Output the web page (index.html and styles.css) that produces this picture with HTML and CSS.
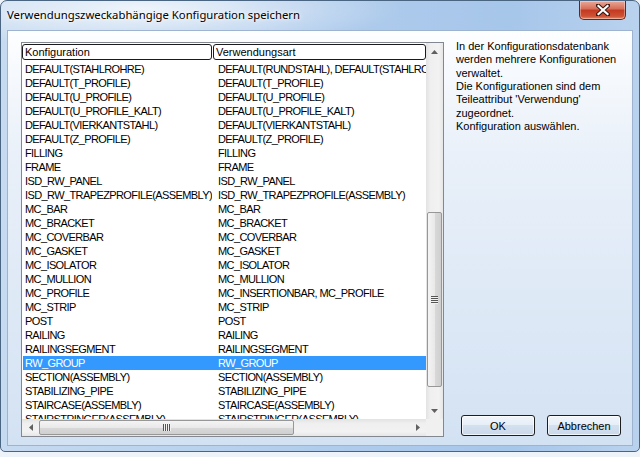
FILE: index.html
```html
<!DOCTYPE html>
<html lang="de">
<head>
  <meta charset="UTF-8">
  <title>Verwendungszweckabhängige Konfiguration speichern</title>
  <link rel="stylesheet" href="styles.css">
</head>
<body>

  <div class="window">
    <div class="titlebar">
      <span class="title">Verwendungszweckabhängige Konfiguration speichern</span>
      <div class="close">
        <svg width="14" height="12" viewBox="0 0 14 12">
          <path d="M2 1.5 L12 10.5 M12 1.5 L2 10.5" stroke="#3b1a14" stroke-width="4.2" stroke-linecap="square"/>
          <path d="M2.5 2 L11.5 10 M11.5 2 L2.5 10" stroke="#ffffff" stroke-width="2.2" stroke-linecap="square"/>
        </svg>
      </div>
    </div>

    <div class="client">
      <div class="listbox">
        <div class="view">
          <div class="header">
            <div class="hcell h1">Konfiguration</div>
            <div class="hcell h2">Verwendungsart</div>
          </div>
          <div class="rows">
            <div class="row"><span class="c1">DEFAULT(STAHLROHRE)</span><span class="c2">DEFAULT(RUNDSTAHL), DEFAULT(STAHLROHRE)</span></div>
            <div class="row"><span class="c1">DEFAULT(T_PROFILE)</span><span class="c2">DEFAULT(T_PROFILE)</span></div>
            <div class="row"><span class="c1">DEFAULT(U_PROFILE)</span><span class="c2">DEFAULT(U_PROFILE)</span></div>
            <div class="row"><span class="c1">DEFAULT(U_PROFILE_KALT)</span><span class="c2">DEFAULT(U_PROFILE_KALT)</span></div>
            <div class="row"><span class="c1">DEFAULT(VIERKANTSTAHL)</span><span class="c2">DEFAULT(VIERKANTSTAHL)</span></div>
            <div class="row"><span class="c1">DEFAULT(Z_PROFILE)</span><span class="c2">DEFAULT(Z_PROFILE)</span></div>
            <div class="row"><span class="c1">FILLING</span><span class="c2">FILLING</span></div>
            <div class="row"><span class="c1">FRAME</span><span class="c2">FRAME</span></div>
            <div class="row"><span class="c1">ISD_RW_PANEL</span><span class="c2">ISD_RW_PANEL</span></div>
            <div class="row"><span class="c1">ISD_RW_TRAPEZPROFILE(ASSEMBLY)</span><span class="c2">ISD_RW_TRAPEZPROFILE(ASSEMBLY)</span></div>
            <div class="row"><span class="c1">MC_BAR</span><span class="c2">MC_BAR</span></div>
            <div class="row"><span class="c1">MC_BRACKET</span><span class="c2">MC_BRACKET</span></div>
            <div class="row"><span class="c1">MC_COVERBAR</span><span class="c2">MC_COVERBAR</span></div>
            <div class="row"><span class="c1">MC_GASKET</span><span class="c2">MC_GASKET</span></div>
            <div class="row"><span class="c1">MC_ISOLATOR</span><span class="c2">MC_ISOLATOR</span></div>
            <div class="row"><span class="c1">MC_MULLION</span><span class="c2">MC_MULLION</span></div>
            <div class="row"><span class="c1">MC_PROFILE</span><span class="c2">MC_INSERTIONBAR, MC_PROFILE</span></div>
            <div class="row"><span class="c1">MC_STRIP</span><span class="c2">MC_STRIP</span></div>
            <div class="row"><span class="c1">POST</span><span class="c2">POST</span></div>
            <div class="row"><span class="c1">RAILING</span><span class="c2">RAILING</span></div>
            <div class="row"><span class="c1">RAILINGSEGMENT</span><span class="c2">RAILINGSEGMENT</span></div>
            <div class="row selected"><span class="c1">RW_GROUP</span><span class="c2">RW_GROUP</span></div>
            <div class="row"><span class="c1">SECTION(ASSEMBLY)</span><span class="c2">SECTION(ASSEMBLY)</span></div>
            <div class="row"><span class="c1">STABILIZING_PIPE</span><span class="c2">STABILIZING_PIPE</span></div>
            <div class="row"><span class="c1">STAIRCASE(ASSEMBLY)</span><span class="c2">STAIRCASE(ASSEMBLY)</span></div>
            <div class="row"><span class="c1">STAIRSTRINGER(ASSEMBLY)</span><span class="c2">STAIRSTRINGER(ASSEMBLY)</span></div>
          </div>
        </div>

        <div class="vscroll">
          <div class="arrow">
            <svg width="7" height="4" viewBox="0 0 7 4"><path d="M0 4 L3.5 0 L7 4 Z" fill="#606060"/></svg>
          </div>
          <div class="vthumb"><div class="grip"></div></div>
          <div class="arrow bottom">
            <svg width="7" height="4" viewBox="0 0 7 4"><path d="M0 0 L3.5 4 L7 0 Z" fill="#606060"/></svg>
          </div>
        </div>

        <div class="hscroll">
          <div class="arrow">
            <svg width="4" height="7" viewBox="0 0 4 7"><path d="M4 0 L0 3.5 L4 7 Z" fill="#606060"/></svg>
          </div>
          <div class="hthumb"><div class="grip"></div></div>
          <div class="arrow right">
            <svg width="4" height="7" viewBox="0 0 4 7"><path d="M0 0 L4 3.5 L0 7 Z" fill="#606060"/></svg>
          </div>
        </div>

        <div class="corner"></div>
      </div>

      <div class="side">
        <p class="info">
          In der Konfigurationsdatenbank<br>
          werden mehrere Konfigurationen<br>
          verwaltet.<br>
          Die Konfigurationen sind dem<br>
          Teileattribut 'Verwendung'<br>
          zugeordnet.<br>
          Konfiguration auswählen.
        </p>
        <div class="buttons">
          <button class="btn">OK</button>
          <button class="btn">Abbrechen</button>
        </div>
      </div>
    </div>
  </div>

</body>
</html>
```

FILE: styles.css
```css
body {
  margin: 0;
  background-color: #eef3f9;
  font-family: "Liberation Sans", Arial, sans-serif;
  font-size: 11px;
  color: #000;
}

.window {
  width: 640px;
  height: 452px;
  box-sizing: border-box;
  border: 1px solid #4a6582;
  border-radius: 7px 7px 5px 5px;
  background:
    radial-gradient(ellipse 260px 40px at 140px 8px, rgba(255,255,255,0.75), rgba(255,255,255,0)),
    linear-gradient(to right, #c6daf0, #aecbec 55%, #a6c6ea 80%, #b9d2ee);
  display: flex;
  flex-direction: column;
  overflow: hidden;
}

.titlebar {
  height: 29px;
  display: flex;
  align-items: flex-start;
}

.title {
  margin: 6px 0 0 6px;
  font-family: "Noto Sans", "Open Sans", sans-serif;
  font-size: 11.3px;
  line-height: 16px;
  text-shadow: 0 0 6px #fff, 0 0 3px #fff;
}

.close {
  margin-left: auto;
  margin-right: 13px;
  width: 47px;
  height: 19px;
  box-sizing: border-box;
  border: 1px solid #6b2418;
  border-top: none;
  border-radius: 0 0 5px 5px;
  background: linear-gradient(#e9a99a, #d66b55 45%, #c2391f 50%, #cf5236 85%, #e58b6c);
  box-shadow: inset 0 0 0 1px rgba(255,255,255,0.35);
  display: flex;
  justify-content: center;
  align-items: center;
}

.client {
  margin: 0 6px;
  height: 416px;
  box-sizing: border-box;
  border: 1px solid #9db3cf;
  background: linear-gradient(#fdfeff, #e9f0f9 30%, #d3e2f3);
  display: flex;
  padding: 11px 11px 9px 13px;
}

/* list view */

.listbox {
  width: 423px;
  height: 395px;
  box-sizing: border-box;
  border: 1px solid #828790;
  background-color: white;
  display: grid;
  grid-template-columns: 404px 17px;
  grid-template-rows: 376px 17px;
}

.view {
  overflow: hidden;
}

.header {
  display: flex;
  height: 19px;
  padding-top: 1px;
  box-sizing: border-box;
}

.hcell {
  height: 16px;
  box-sizing: border-box;
  border: 1px solid #1a1a1a;
  border-radius: 3px;
  padding-left: 2px;
  line-height: 14px;
  white-space: nowrap;
  overflow: hidden;
}

.h1 {
  width: 190px;
  margin-right: 1px;
}

.h2 {
  width: 213px;
}

.row {
  display: flex;
  width: 403px;
  height: 14px;
  line-height: 14px;
  margin-left: 1px;
  white-space: nowrap;
  letter-spacing: -0.6px;
}

.row span {
  overflow: hidden;
}

.c1 {
  width: 187px;
  padding-left: 2px;
}

.c2 {
  width: 208px;
  padding-left: 6px;
}

.selected {
  background-color: #3399ff;
  color: white;
}

/* scroll bars */

.vscroll {
  background: linear-gradient(to right, #e2e2e2, #efefef 25%, #f2f2f2 75%, #e6e6e6);
  display: flex;
  flex-direction: column;
}

.hscroll {
  background: linear-gradient(#e2e2e2, #efefef 25%, #f2f2f2 75%, #e6e6e6);
  display: flex;
}

.arrow {
  width: 17px;
  height: 17px;
  flex: none;
  display: flex;
  justify-content: center;
  align-items: center;
}

.arrow.bottom {
  margin-top: auto;
}

.arrow.right {
  margin-left: auto;
}

.vthumb,
.hthumb {
  box-sizing: border-box;
  border: 1px solid #979797;
  border-radius: 2px;
  display: flex;
  justify-content: center;
  align-items: center;
}

.vthumb {
  width: 15px;
  height: 175px;
  margin: 152px 0 0 1px;
  background: linear-gradient(to right, #f4f4f4, #e9e9e9 50%, #d9d9d9 51%, #cfcfcf);
}

.hthumb {
  width: 255px;
  height: 15px;
  margin-top: 1px;
  background: linear-gradient(#f4f4f4, #e9e9e9 50%, #d9d9d9 51%, #cfcfcf);
}

.vthumb .grip {
  width: 7px;
  height: 8px;
  background: repeating-linear-gradient(#555 0 1px, #f2f2f2 1px 2px);
}

.hthumb .grip {
  width: 8px;
  height: 7px;
  background: repeating-linear-gradient(to right, #555 0 1px, #f2f2f2 1px 2px);
}

.corner {
  background-color: #f0f0f0;
}

/* right side */

.side {
  flex: 1;
  margin: -2px 0 0 12px;
  display: flex;
  flex-direction: column;
}

.info {
  margin: 0;
  line-height: 13.33px;
  white-space: nowrap;
}

.buttons {
  margin-top: auto;
  display: flex;
  justify-content: flex-end;
  gap: 12px;
}

.btn {
  width: 74px;
  height: 21px;
  padding: 0;
  border: 1px solid #1e1e1e;
  border-radius: 3px;
  background: linear-gradient(#f2f6fb, #e6eef8 45%, #d3e0ef 50%, #cad9eb);
  box-shadow: inset 0 0 0 1px rgba(255,255,255,0.7);
  font-family: "Liberation Sans", Arial, sans-serif;
  font-size: 11px;
  color: #000;
}
```
